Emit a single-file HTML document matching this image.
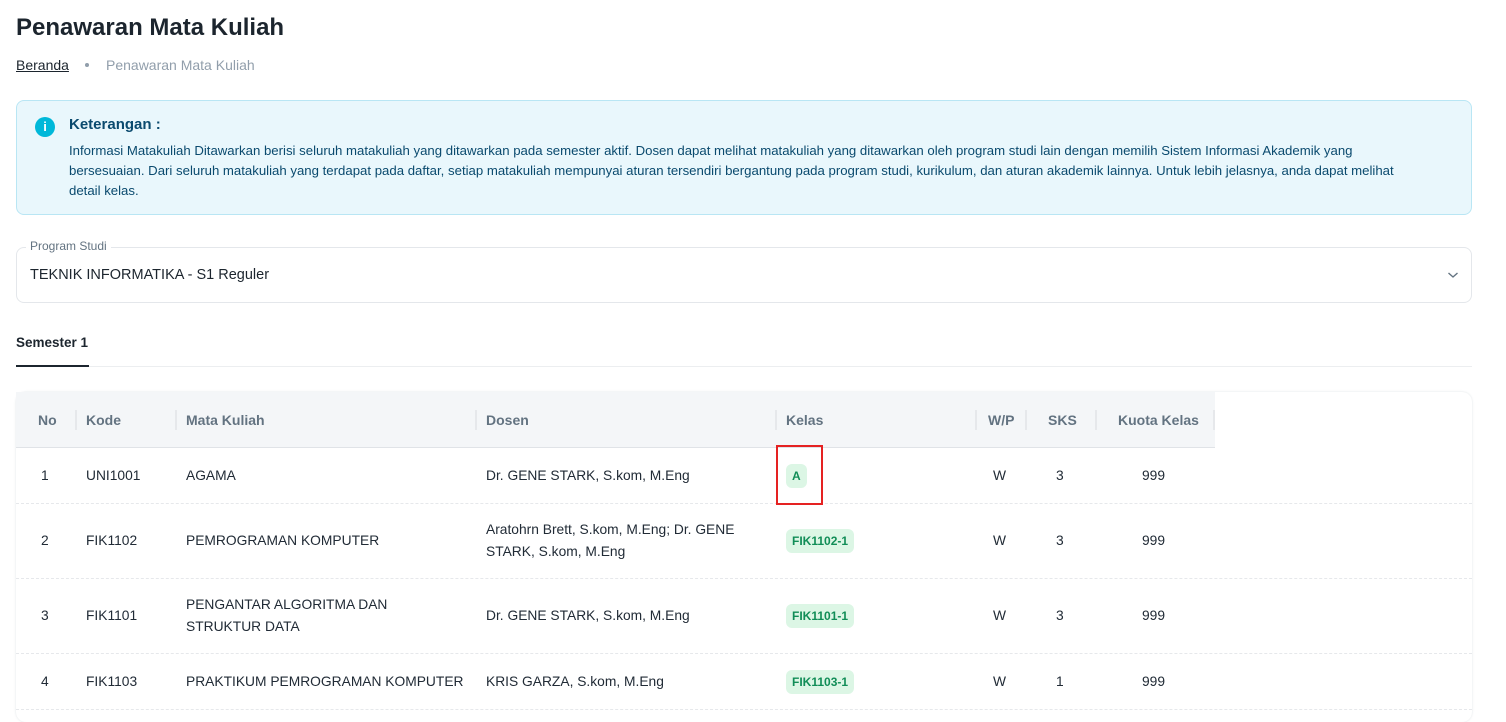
<!DOCTYPE html>
<html><head><meta charset="utf-8"><style>
*{box-sizing:border-box;margin:0;padding:0}
body{width:1506px;height:712px;overflow:hidden;background:#fff;font-family:"Liberation Sans",sans-serif;color:#212b36;position:relative}
.abs{position:absolute;white-space:nowrap}
h1{position:absolute;left:16px;top:14px;font-size:24px;font-weight:bold;color:#1c252e}
.info{position:absolute;left:16px;top:100px;width:1456px;height:115px;background:#e9f7fc;border:1px solid #b9e6f4;border-radius:8px}
.info .t{position:absolute;left:52px;top:15px;font-size:15px;font-weight:bold;color:#0a4a6e}
.info .p{position:absolute;left:52px;top:40px;width:1400px;font-size:13.2px;line-height:20px;color:#0a4a6e;white-space:nowrap}
.ic{position:absolute;left:18px;top:16px;width:20px;height:20px;border-radius:50%;background:#00b8d9;color:#fff;font-size:13px;font-weight:bold;text-align:center;line-height:20px}
.sel{position:absolute;left:16px;top:247px;width:1456px;height:56px;border:1px solid #e4e7eb;border-radius:8px}
.tbl{position:absolute;left:16px;top:392px;width:1456px;height:330px;border-radius:10px;box-shadow:0 0 2px rgba(145,158,171,.3)}
.hd{position:absolute;left:0;top:0;width:1199px;height:56px;background:#f4f6f8;border-bottom:1px solid #e0e3e7}
.th{position:absolute;top:20px;font-size:14px;font-weight:bold;color:#637381}
.sep{position:absolute;top:18px;width:2px;height:20px;background:#e6e8eb}
.row{position:absolute;left:0;width:1456px;border-bottom:1px dashed #e6e8eb}
.td{position:absolute;font-size:13.8px;color:#212b36;line-height:22px}
.bd{position:absolute;height:24px;padding:0 6px;background:#dcf6e5;color:#118d57;font-size:12px;font-weight:bold;line-height:24px;border-radius:6px}
</style></head><body>
<h1>Penawaran Mata Kuliah</h1>
<div class="abs" style="left:16px;top:57px;font-size:14px;color:#1c252e;text-decoration:underline">Beranda</div>
<div class="abs" style="left:85px;width:4px;height:4px;top:63px;border-radius:50%;background:#919eab"></div>
<div class="abs" style="left:106px;top:57px;font-size:14px;color:#919eab">Penawaran Mata Kuliah</div>
<div class="info"><div class="ic">i</div><div class="t">Keterangan :</div>
<div class="p">Informasi Matakuliah Ditawarkan berisi seluruh matakuliah yang ditawarkan pada semester aktif. Dosen dapat melihat matakuliah yang ditawarkan oleh program studi lain dengan memilih Sistem Informasi Akademik yang<br>bersesuaian. Dari seluruh matakuliah yang terdapat pada daftar, setiap matakuliah mempunyai aturan tersendiri bergantung pada program studi, kurikulum, dan aturan akademik lainnya. Untuk lebih jelasnya, anda dapat melihat<br>detail kelas.</div></div>
<div class="sel"></div>
<div class="abs" style="left:26px;top:239px;padding:0 4px;background:#fff;font-size:12px;color:#637381">Program Studi</div>
<div class="abs" style="left:30px;top:267px;font-size:14.5px;color:#1c252e">TEKNIK INFORMATIKA - S1 Reguler</div>
<svg class="abs" style="left:1447px;top:271px" width="12" height="8" viewBox="0 0 12 8"><path d="M1.5 2l4.5 4 4.5-4" fill="none" stroke="#637381" stroke-width="1.4"/></svg>
<div class="abs" style="left:16px;top:335px;font-size:13.5px;font-weight:bold;color:#1c252e">Semester 1</div>
<div class="abs" style="left:16px;top:366px;width:1456px;height:1px;background:#eceef0"></div>
<div class="abs" style="left:16px;top:365px;width:73px;height:2px;background:#1c252e"></div>
<div class="tbl">
<div class="hd">
<div class="th" style="left:22px">No</div><div class="sep" style="left:59px"></div>
<div class="th" style="left:70px">Kode</div><div class="sep" style="left:159px"></div>
<div class="th" style="left:170px">Mata Kuliah</div><div class="sep" style="left:459px"></div>
<div class="th" style="left:470px">Dosen</div><div class="sep" style="left:759px"></div>
<div class="th" style="left:770px">Kelas</div><div class="sep" style="left:959px"></div>
<div class="th" style="left:972px">W/P</div><div class="sep" style="left:1009px"></div>
<div class="th" style="left:1032px">SKS</div><div class="sep" style="left:1079px"></div>
<div class="th" style="left:1102px">Kuota Kelas</div><div class="sep" style="left:1197px"></div>
</div>
<div class="row" style="top:56px;height:56px">
<div class="td" style="left:25px;top:17px">1</div><div class="td" style="left:70px;top:17px">UNI1001</div><div class="td" style="left:170px;top:17px">AGAMA</div><div class="td" style="left:470px;top:17px">Dr. GENE STARK, S.kom, M.Eng</div>
<div class="bd" style="left:770px;top:16px">A</div>
<div class="abs" style="left:760px;top:-3px;width:47px;height:60px;border:2px solid #e52222"></div>
<div class="td" style="left:977px;top:17px">W</div><div class="td" style="left:1040px;top:17px">3</div><div class="td" style="left:1126px;top:17px">999</div></div>
<div class="row" style="top:112px;height:75px">
<div class="td" style="left:25px;top:26px">2</div><div class="td" style="left:70px;top:26px">FIK1102</div><div class="td" style="left:170px;top:26px">PEMROGRAMAN KOMPUTER</div><div class="td" style="left:470px;top:15px;width:280px;white-space:normal">Aratohrn Brett, S.kom, M.Eng; Dr. GENE STARK, S.kom, M.Eng</div>
<div class="bd" style="left:770px;top:25px">FIK1102-1</div>
<div class="td" style="left:977px;top:26px">W</div><div class="td" style="left:1040px;top:26px">3</div><div class="td" style="left:1126px;top:26px">999</div></div>
<div class="row" style="top:187px;height:75px">
<div class="td" style="left:25px;top:26px">3</div><div class="td" style="left:70px;top:26px">FIK1101</div><div class="td" style="left:170px;top:15px;width:260px">PENGANTAR ALGORITMA DAN<br>STRUKTUR DATA</div><div class="td" style="left:470px;top:26px">Dr. GENE STARK, S.kom, M.Eng</div>
<div class="bd" style="left:770px;top:25px">FIK1101-1</div>
<div class="td" style="left:977px;top:26px">W</div><div class="td" style="left:1040px;top:26px">3</div><div class="td" style="left:1126px;top:26px">999</div></div>
<div class="row" style="top:262px;height:56px">
<div class="td" style="left:25px;top:17px">4</div><div class="td" style="left:70px;top:17px">FIK1103</div><div class="td" style="left:170px;top:17px">PRAKTIKUM PEMROGRAMAN KOMPUTER</div><div class="td" style="left:470px;top:17px">KRIS GARZA, S.kom, M.Eng</div>
<div class="bd" style="left:770px;top:16px">FIK1103-1</div>
<div class="td" style="left:977px;top:17px">W</div><div class="td" style="left:1040px;top:17px">1</div><div class="td" style="left:1126px;top:17px">999</div></div>
</div>
</body></html>
